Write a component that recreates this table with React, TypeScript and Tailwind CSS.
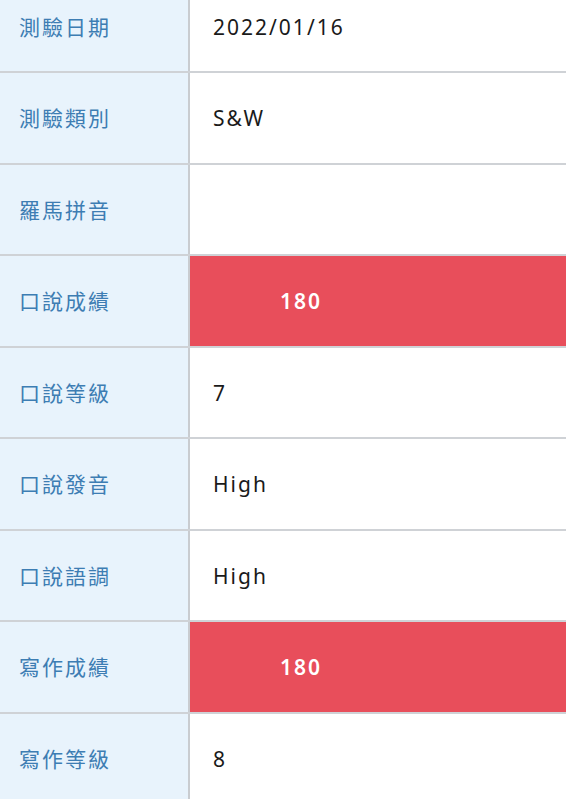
const rows: { label: string; value: string; highlight?: boolean }[] = [
  { label: "測驗日期", value: "2022/01/16" },
  { label: "測驗類別", value: "S&W" },
  { label: "羅馬拼音", value: "" },
  { label: "口說成績", value: "180", highlight: true },
  { label: "口說等級", value: "7" },
  { label: "口說發音", value: "High" },
  { label: "口說語調", value: "High" },
  { label: "寫作成績", value: "180", highlight: true },
  { label: "寫作等級", value: "8" },
];

const App = () => {
  return (
    <div className="h-[799px] w-[566px] overflow-hidden bg-white">
      <div className="mt-[-18.5px] font-['Noto_Sans','Noto_Sans_CJK_TC',sans-serif] text-[21px] tracking-[2px]">
        {rows.map((r) => (
          <div
            key={r.label}
            className="flex h-[91.5px] border-b-2 border-[#cfd2d6]"
          >
            <div className="flex w-[190px] shrink-0 items-center border-r-2 border-[#c9ccd0] bg-[#e8f3fc] pl-[19px] pt-[2px] text-[#3d7db3]">
              {r.label}
            </div>
            {r.highlight ? (
              <div className="flex flex-1 items-center bg-[#e84e5b] pl-[90px] pt-[2px] font-semibold text-white">
                {r.value}
              </div>
            ) : (
              <div className="flex flex-1 items-center pl-[23px] pt-[2px] text-[#1a1a1a]">
                {r.value}
              </div>
            )}
          </div>
        ))}
      </div>
    </div>
  );
};

export default App;
